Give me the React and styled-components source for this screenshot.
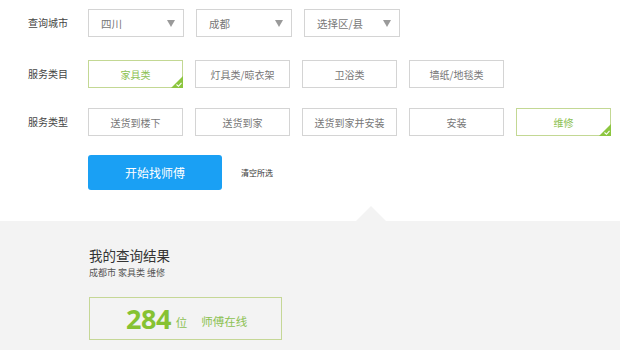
import React from "react";
import styled, { createGlobalStyle, css } from "styled-components";

const Global = createGlobalStyle`
  html, body { margin: 0; padding: 0; background: #fff; }
  body { font-family: "Noto Sans CJK SC", "Noto Sans", sans-serif; color: #555; }
  * { box-sizing: border-box; }
`;

const Page = styled.div`
  width: 620px;
  height: 350px;
  overflow: hidden;
  display: flex;
  flex-direction: column;
`;

const Form = styled.div`
  padding: 9px 0 0 28px;
  display: flex;
  flex-direction: column;
`;

const Row = styled.div`
  display: flex;
  align-items: center;
  height: 28px;
  margin-top: ${(p) => p.$mt || 0}px;
`;

const Label = styled.div`
  width: 60px;
  font-size: 10px;
  line-height: 28px;
  color: #444;
  flex-shrink: 0;
`;

const Options = styled.div`
  display: flex;
  gap: ${(p) => p.$gap || 12}px;
`;

const Select = styled.div`
  width: 96px;
  height: 28px;
  border: 1px solid #d4d4d4;
  display: flex;
  align-items: center;
  justify-content: space-between;
  padding: 0 8px 0 12px;
  font-size: 10.5px;
  color: #777;
`;

const Caret = styled.span`
  width: 0;
  height: 0;
  border-left: 4.5px solid transparent;
  border-right: 4.5px solid transparent;
  border-top: 7px solid #9a9a9a;
`;

const Option = styled.div`
  position: relative;
  width: 95px;
  height: 28px;
  border: 1px solid #d4d4d4;
  display: flex;
  align-items: center;
  justify-content: center;
  font-size: 10px;
  color: #777;
  ${(p) =>
    p.$active &&
    css`
      border-color: #c3d894;
      color: #8cc152;
    `}
`;

const Corner = styled.svg`
  position: absolute;
  right: -1px;
  bottom: -1px;
`;

const Actions = styled.div`
  display: flex;
  align-items: center;
  margin: 19px 0 0 60px;
`;

const PrimaryButton = styled.button`
  width: 134px;
  height: 35px;
  border: none;
  border-radius: 3px;
  background: #1aa0f4;
  color: #fff;
  font-family: inherit;
  font-size: 12px;
  padding: 0;
`;

const ClearLink = styled.span`
  margin-left: 19px;
  font-size: 8px;
  color: #333;
`;

const Results = styled.div`
  position: relative;
  margin-top: 31px;
  flex: 1;
  background: #f3f3f3;
  padding: 25px 0 0 89px;
  &::before {
    content: "";
    position: absolute;
    left: 356px;
    top: -15px;
    width: 0;
    height: 0;
    border-left: 15px solid transparent;
    border-right: 15px solid transparent;
    border-bottom: 15px solid #f3f3f3;
  }
`;

const Title = styled.div`
  font-size: 13.5px;
  line-height: 18px;
  color: #333;
`;

const Sub = styled.div`
  font-size: 9px;
  line-height: 12px;
  margin-top: 3px;
  color: #555;
`;

const CountBox = styled.div`
  margin-top: 18px;
  width: 193px;
  height: 43px;
  border: 1px solid #c5d796;
  display: flex;
  align-items: center;
  padding-left: 36px;
  color: #8cc152;
`;

const Number = styled.span`
  font-family: "Open Sans", "Noto Sans", sans-serif;
  font-weight: 700;
  font-size: 27px;
  line-height: 1;
  color: #86c232;
  letter-spacing: -0.5px;
`;

const Unit = styled.span`
  font-size: 11.5px;
  margin-left: 5px;
  margin-top: 6px;
`;

const Online = styled.span`
  font-size: 11.5px;
  margin-left: 14px;
  margin-top: 4px;
`;

const Check = () => (
  <Corner width="12" height="12" viewBox="0 0 12 12">
    <polygon points="12,0 12,12 0,12" fill="#8cc63f" />
    <polyline points="5.5,8.5 7.5,10.3 10.5,6.8" fill="none" stroke="#fff" strokeWidth="1.1" />
  </Corner>
);

const categories = ["家具类", "灯具类/晾衣架", "卫浴类", "墙纸/地毯类"];
const types = ["送货到楼下", "送货到家", "送货到家并安装", "安装", "维修"];

export default function App() {
  return (
    <Page>
      <Global />
      <Form>
        <Row>
          <Label>查询城市</Label>
          <Options>
            {["四川", "成都", "选择区/县"].map((t) => (
              <Select key={t}>
                {t}
                <Caret />
              </Select>
            ))}
          </Options>
        </Row>
        <Row $mt={23}>
          <Label>服务类目</Label>
          <Options>
            {categories.map((t, i) => (
              <Option key={t} $active={i === 0}>
                {t}
                {i === 0 && <Check />}
              </Option>
            ))}
          </Options>
        </Row>
        <Row $mt={20}>
          <Label>服务类型</Label>
          <Options>
            {types.map((t, i) => (
              <Option key={t} $active={i === 4}>
                {t}
                {i === 4 && <Check />}
              </Option>
            ))}
          </Options>
        </Row>
        <Actions>
          <PrimaryButton>开始找师傅</PrimaryButton>
          <ClearLink>清空所选</ClearLink>
        </Actions>
      </Form>
      <Results>
        <Title>我的查询结果</Title>
        <Sub>成都市 家具类 维修</Sub>
        <CountBox>
          <Number>284</Number>
          <Unit>位</Unit>
          <Online>师傅在线</Online>
        </CountBox>
      </Results>
    </Page>
  );
}
